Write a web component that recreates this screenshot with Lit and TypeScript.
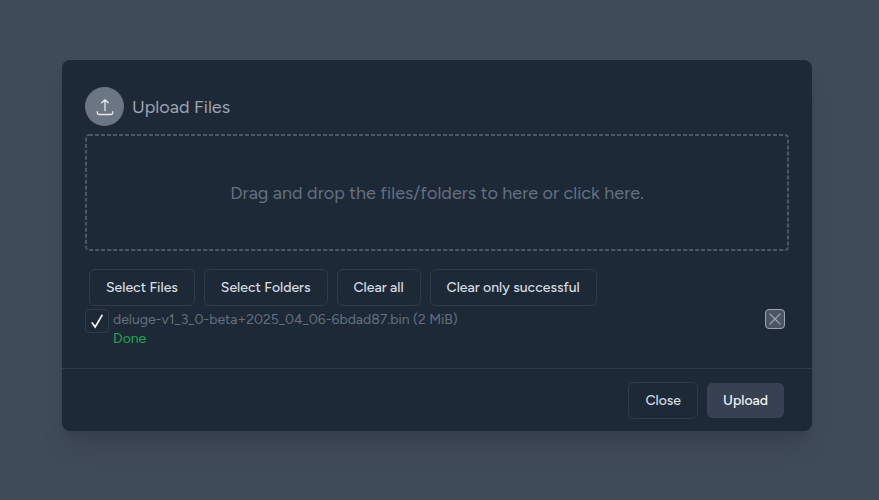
import { LitElement, html, css } from "lit";
import { customElement, state } from "lit/decorators.js";

interface UploadEntry {
  name: string;
  size: string;
  status: string;
  checked: boolean;
}

@customElement("app-root")
export class AppRoot extends LitElement {
  static styles = css`
    :host {
      display: block;
      font-family: Figtree, Lato, "Noto Sans", sans-serif;
      --panel: #1e2937;
      --line: #303b49;
    }
    * {
      box-sizing: border-box;
    }
    .backdrop {
      min-height: 100vh;
      padding: 60px 67px 60px 62px;
      background: #404b59;
    }
    .dialog {
      background: var(--panel);
      border-radius: 8px;
      box-shadow: 0 20px 25px -5px rgba(30, 36, 44, 0.2), 0 8px 10px -6px rgba(30, 36, 44, 0.2);
    }
    .body {
      padding: 27px 23px 20px;
    }
    .heading {
      display: flex;
      align-items: center;
      gap: 8px;
      margin-bottom: 8px;
    }
    .badge {
      display: grid;
      place-items: center;
      width: 39px;
      height: 39px;
      border-radius: 50%;
      background: #6b7583;
    }
    .title {
      margin: 0;
      font-size: 18px;
      line-height: 28px;
      font-weight: 400;
      color: #9ca3af;
    }
    .drop {
      position: relative;
      display: block;
      width: 100%;
      height: 117px;
      padding: 0;
      border: 0;
      background: none;
      color: #647080;
      font: 400 18px/28px Figtree, Lato, "Noto Sans", sans-serif;
    }
    .outline {
      position: absolute;
      inset: 0;
      width: 100%;
      height: 100%;
    }
    .outline rect {
      x: 1px;
      y: 1px;
      width: calc(100% - 2px);
      height: calc(100% - 2px);
      rx: 3px;
      fill: none;
      stroke: #4b5765;
      stroke-width: 2px;
      stroke-dasharray: 4 2;
    }
    .actions {
      display: flex;
      flex-wrap: wrap;
      gap: 9px;
      margin: 18px 4px 3px;
    }
    .btn {
      height: 37px;
      padding: 0 16px;
      border: 1px solid var(--line);
      border-radius: 6px;
      background: none;
      color: #d8dce2;
      font: 500 14px/20px Figtree, Lato, "Noto Sans", sans-serif;
      white-space: nowrap;
    }
    .primary {
      border-color: var(--panel);
      background: #374151;
      background-clip: padding-box;
      color: #f3f4f6;
    }
    .entry {
      display: flex;
      align-items: flex-start;
      gap: 4px;
    }
    .tick {
      appearance: none;
      width: 24px;
      height: 24px;
      margin: 0;
      border: 1px solid var(--line);
      border-radius: 4px;
      background: no-repeat center / 14px 16px
        url("data:image/svg+xml,%3Csvg xmlns='http://www.w3.org/2000/svg' viewBox='0 0 14 16'%3E%3Cpath d='M2.2 10 5.2 14 12 2.4' fill='none' stroke='white' stroke-width='1.7' stroke-linecap='round'/%3E%3C/svg%3E");
    }
    .tick:not(:checked) {
      background: none;
    }
    .info {
      flex: 1;
      padding-top: 1px;
      font-size: 14px;
      line-height: 19px;
      color: #647080;
    }
    .name {
      display: block;
    }
    .status {
      margin: 0;
      color: #22a650;
    }
    .remove {
      display: grid;
      place-items: center;
      width: 20px;
      height: 20px;
      padding: 0;
      margin-right: 4px;
      border: 1px solid #9ca3af;
      border-radius: 4px;
      background: #4b5563;
      color: #9ca3af;
    }
    .footer {
      display: flex;
      justify-content: flex-end;
      gap: 8px;
      padding: 13px 27px 12px;
      border-top: 1px solid var(--line);
    }
  `;

  @state() private entries: UploadEntry[] = [
    {
      name: "deluge-v1_3_0-beta+2025_04_06-6bdad87.bin",
      size: "2 MiB",
      status: "Done",
      checked: true,
    },
  ];

  private actions = ["Select Files", "Select Folders", "Clear all", "Clear only successful"];

  render() {
    return html`
      <main class="backdrop">
        <section class="dialog" role="dialog" aria-labelledby="title">
          <div class="body">
            <header class="heading">
              <span class="badge">
                <svg width="20" height="20" viewBox="0 0 20 20" fill="none" stroke="#e5e7eb" stroke-width="1.3" stroke-linecap="round" stroke-linejoin="round" aria-hidden="true">
                  <path d="M2.3 14.7v1.1a1.7 1.7 0 0 0 1.7 1.7h12a1.7 1.7 0 0 0 1.7-1.7V14.7M6.8 5.8 10 2.6l3.2 3.2M10 2.6V13.5" />
                </svg>
              </span>
              <h1 class="title" id="title">Upload Files</h1>
            </header>
            <button class="drop" type="button">
              <svg class="outline" aria-hidden="true"><rect /></svg>
              Drag and drop the files/folders to here or click here.
            </button>
            <div class="actions">
              ${this.actions.map((label) => html`<button class="btn" type="button">${label}</button>`)}
            </div>
            ${this.entries.map(
              (entry, i) => html`
                <div class="entry">
                  <input class="tick" type="checkbox" id="entry-${i}" .checked=${entry.checked} />
                  <div class="info">
                    <label class="name" for="entry-${i}">${entry.name} (${entry.size})</label>
                    <p class="status">${entry.status}</p>
                  </div>
                  <button class="remove" type="button" aria-label="Remove file">
                    <svg width="14" height="14" viewBox="0 0 14 14" fill="none" stroke="currentColor" stroke-width="1.2" stroke-linecap="round" aria-hidden="true">
                      <path d="M2 2l10 10M12 2 2 12" />
                    </svg>
                  </button>
                </div>
              `,
            )}
          </div>
          <footer class="footer">
            <button class="btn" type="button">Close</button>
            <button class="btn primary" type="button">Upload</button>
          </footer>
        </section>
      </main>
    `;
  }
}
